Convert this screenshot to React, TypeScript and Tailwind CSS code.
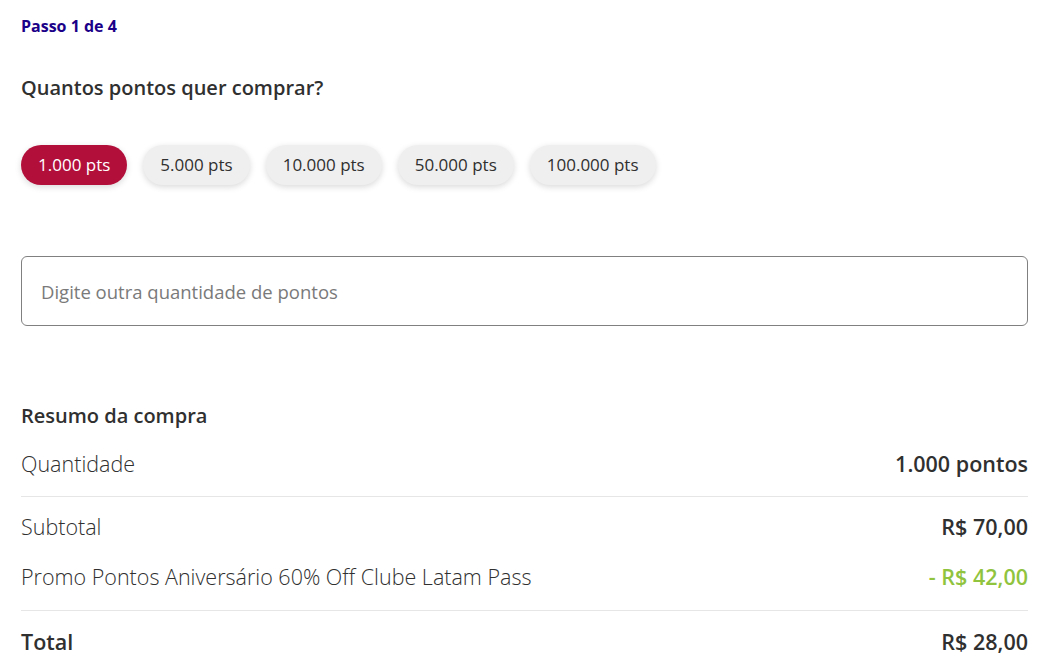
import React, { useState } from 'react';

const OPTIONS = ['1.000 pts', '5.000 pts', '10.000 pts', '50.000 pts', '100.000 pts'];

export default function App() {
  const [selected, setSelected] = useState(0);

  return (
    <div className="min-h-screen bg-white px-[21px] text-[#303030]" style={{ fontFamily: '"Open Sans", "Noto Sans", sans-serif' }}>
      <p className="pt-[16px] text-[16px] font-bold leading-[20px] text-[#1b0088]">Passo 1 de 4</p>

      <h2 className="mt-[39px] text-[20px] font-semibold leading-[26px]">Quantos pontos quer comprar?</h2>

      <div className="mt-[44px] flex gap-4">
        {OPTIONS.map((opt, i) => (
          <button
            key={opt}
            onClick={() => setSelected(i)}
            className={
              i === selected
                ? 'h-[40px] rounded-full bg-[#b30f3b] px-[17px] text-[17px] text-white shadow-[0_2px_6px_rgba(0,0,0,0.15)]'
                : 'h-[40px] rounded-full bg-[#efefef] px-[17px] text-[17px] text-[#303030] shadow-[0_2px_6px_rgba(0,0,0,0.15)]'
            }
          >
            {opt}
          </button>
        ))}
      </div>

      <input
        placeholder="Digite outra quantidade de pontos"
        className="mt-[71px] block h-[70px] w-full rounded-[6px] border border-[#808080] px-[19px] text-[18.5px] text-[#303030] outline-none placeholder:text-[#7a7a7a]"
      />

      <div className="mt-[76px]">
        <h3 className="text-[20px] font-semibold leading-[28px]">Resumo da compra</h3>
        <div className="flex items-center justify-between pt-[20px] pb-[18px] text-[21.5px] leading-[28px]">
          <span className="font-light">Quantidade</span>
          <span className="font-semibold">1.000 pontos</span>
        </div>
        <div className="border-t border-[#e6e6e6]" />
        <div className="flex items-center justify-between pt-[16px] text-[21.5px] leading-[28px]">
          <span className="font-light">Subtotal</span>
          <span className="font-semibold">R$ 70,00</span>
        </div>
        <div className="flex items-center justify-between pt-[22px] pb-[19px] text-[21.5px] leading-[28px]">
          <span className="font-light">Promo Pontos Aniversário 60% Off Clube Latam Pass</span>
          <span className="font-semibold text-[#90c33e]">- R$ 42,00</span>
        </div>
        <div className="border-t border-[#e6e6e6]" />
        <div className="flex items-center justify-between pt-[17px] text-[21.5px] leading-[28px]">
          <span className="font-semibold">Total</span>
          <span className="font-semibold">R$ 28,00</span>
        </div>
      </div>
    </div>
  );
}
